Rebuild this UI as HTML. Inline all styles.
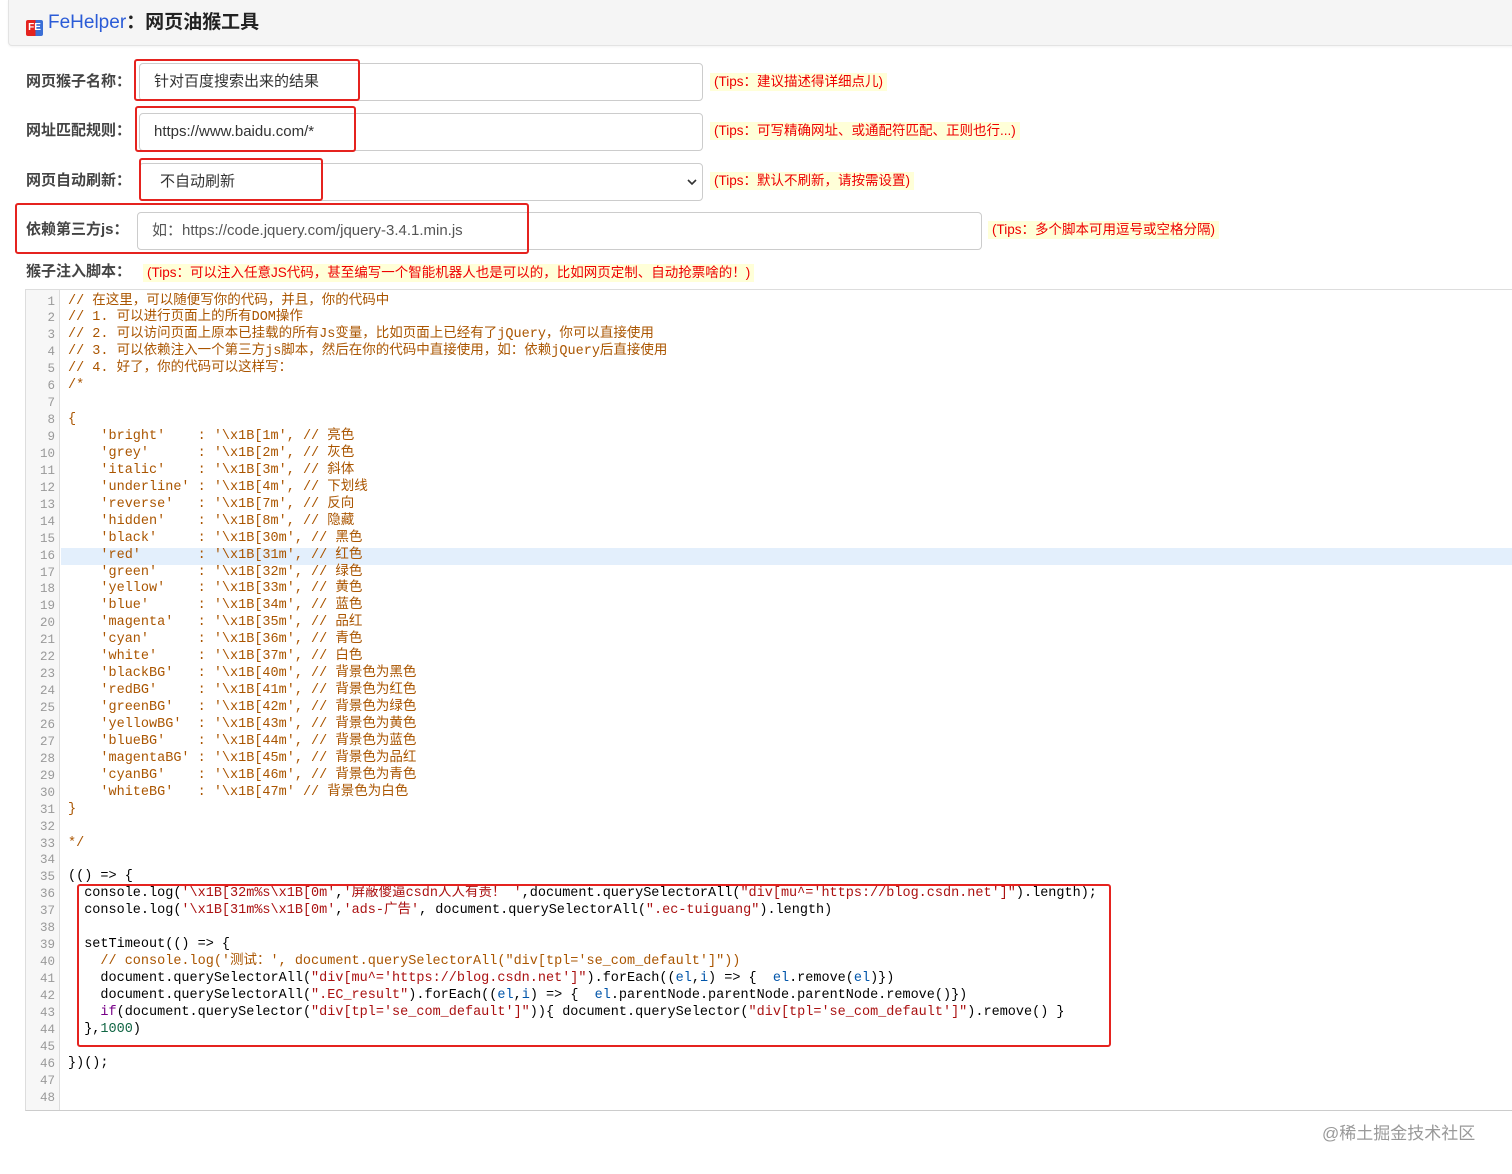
<!DOCTYPE html>
<html><head><meta charset="utf-8"><style>
*{margin:0;padding:0;box-sizing:border-box}
body{width:1512px;height:1174px;background:#fff;position:relative;overflow:hidden;font-family:"Liberation Sans","Noto Sans CJK SC",sans-serif;color:#333}
.a{position:absolute}
.hdr{left:8px;top:0;width:1510px;height:46px;background:#f5f5f5;border:1px solid #e3e3e3;border-top:none;border-radius:0 0 4px 4px;box-shadow:0 1px 2px rgba(0,0,0,.05)}
.title{left:26px;top:12px;font-size:18px;font-weight:bold;color:#222;line-height:22px}
.lbl{left:26px;font-size:15px;font-weight:bold;color:#444;line-height:20px}
.inp{border:1px solid #ccc;border-radius:4px;background:#fff;font-size:15px;color:#333;line-height:36px;padding-left:14px}
.tip{font-size:13.5px;color:#e00;background:#ffffd8;line-height:18px;padding:0 4px}
.rb{border:2px solid #e5231f;border-radius:3px}
.ed{left:25px;top:289px;width:1500px;height:822px;border-top:1px solid #ddd;border-bottom:1px solid #ccc;border-left:1px solid #ddd}
.gut{left:26px;top:290px;width:34px;height:820px;background:#f7f7f7;border-right:1px solid #ddd}
.ln{left:26px;width:29px;text-align:right;font-family:"Liberation Mono",monospace;font-size:12.5px;color:#999;line-height:16.94px}
.code{left:68px;top:293.5px;font-family:"Liberation Mono","Noto Sans CJK SC",monospace;font-size:13.5px;line-height:16.94px;white-space:pre;color:#000}
.c{color:#a50}.s{color:#a11}.v{color:#05a}.n{color:#164}.k{color:#708}
</style></head><body>
<div class="a hdr"></div>
<div class="a title" style="font-size:19px"><span style="display:inline-block;width:17px;height:16px;color:#fff;font-size:10px;line-height:16px;text-align:center;vertical-align:-2px;border-radius:2px;margin-right:5px;background:linear-gradient(90deg,#e4231f 55%,#3b6fd6 55%)">FE</span><span style="color:#2a5bd7;font-weight:normal">FeHelper</span>：网页油猴工具</div>

<div class="a lbl" style="top:72px">网页猴子名称：</div>
<div class="a inp" style="left:139px;top:63px;width:564px;height:38px">针对百度搜索出来的结果</div>
<div class="a tip" style="left:710px;top:73px">(Tips：建议描述得详细点儿)</div>
<div class="a rb" style="left:134px;top:59px;width:226px;height:42px"></div>

<div class="a lbl" style="top:121px">网址匹配规则：</div>
<div class="a inp" style="left:139px;top:113px;width:564px;height:38px">https://www.baidu.com/*</div>
<div class="a tip" style="left:710px;top:122px">(Tips：可写精确网址、或通配符匹配、正则也行...)</div>
<div class="a rb" style="left:135px;top:106px;width:221px;height:46px"></div>

<div class="a lbl" style="top:171px">网页自动刷新：</div>
<div class="a inp" style="left:139px;top:163px;width:564px;height:38px;padding-left:20px">不自动刷新<svg style="position:absolute;right:4px;top:13px" width="12" height="10" viewBox="0 0 12 10"><path d="M2 3l4 4 4-4" stroke="#333" stroke-width="1.6" fill="none"/></svg></div>
<div class="a tip" style="left:710px;top:172px">(Tips：默认不刷新，请按需设置)</div>
<div class="a rb" style="left:139px;top:158px;width:184px;height:43px"></div>

<div class="a lbl" style="top:220px">依赖第三方js：</div>
<div class="a inp" style="left:137px;top:212px;width:845px;height:38px;color:#555">如：https://code.jquery.com/jquery-3.4.1.min.js</div>
<div class="a tip" style="left:988px;top:221px">(Tips：多个脚本可用逗号或空格分隔)</div>
<div class="a rb" style="left:15px;top:203px;width:514px;height:51px"></div>

<div class="a lbl" style="top:262px">猴子注入脚本：</div>
<div class="a tip" style="left:143px;top:264px">(Tips：可以注入任意JS代码，甚至编写一个智能机器人也是可以的，比如网页定制、自动抢票啥的！)</div>

<div class="a ed"></div>
<div class="a gut"></div>
<div class="a" style="left:61px;top:548px;width:1451px;height:17px;background:#e3effc"></div>
<div class="a ln" style="top:293.5px">1<br>2<br>3<br>4<br>5<br>6<br>7<br>8<br>9<br>10<br>11<br>12<br>13<br>14<br>15<br>16<br>17<br>18<br>19<br>20<br>21<br>22<br>23<br>24<br>25<br>26<br>27<br>28<br>29<br>30<br>31<br>32<br>33<br>34<br>35<br>36<br>37<br>38<br>39<br>40<br>41<br>42<br>43<br>44<br>45<br>46<br>47<br>48</div>
<div class="a code"><span class="c">// 在这里，可以随便写你的代码，并且，你的代码中
// 1. 可以进行页面上的所有DOM操作
// 2. 可以访问页面上原本已挂载的所有Js变量，比如页面上已经有了jQuery，你可以直接使用
// 3. 可以依赖注入一个第三方js脚本，然后在你的代码中直接使用，如：依赖jQuery后直接使用
// 4. 好了，你的代码可以这样写：
/*

{
    'bright'    : '\x1B[1m', // 亮色
    'grey'      : '\x1B[2m', // 灰色
    'italic'    : '\x1B[3m', // 斜体
    'underline' : '\x1B[4m', // 下划线
    'reverse'   : '\x1B[7m', // 反向
    'hidden'    : '\x1B[8m', // 隐藏
    'black'     : '\x1B[30m', // 黑色
    'red'       : '\x1B[31m', // 红色
    'green'     : '\x1B[32m', // 绿色
    'yellow'    : '\x1B[33m', // 黄色
    'blue'      : '\x1B[34m', // 蓝色
    'magenta'   : '\x1B[35m', // 品红
    'cyan'      : '\x1B[36m', // 青色
    'white'     : '\x1B[37m', // 白色
    'blackBG'   : '\x1B[40m', // 背景色为黑色
    'redBG'     : '\x1B[41m', // 背景色为红色
    'greenBG'   : '\x1B[42m', // 背景色为绿色
    'yellowBG'  : '\x1B[43m', // 背景色为黄色
    'blueBG'    : '\x1B[44m', // 背景色为蓝色
    'magentaBG' : '\x1B[45m', // 背景色为品红
    'cyanBG'    : '\x1B[46m', // 背景色为青色
    'whiteBG'   : '\x1B[47m' // 背景色为白色
}

*/</span>

(() =&gt; {
  console.log(<span class="s">'\x1B[32m%s\x1B[0m'</span>,<span class="s">'屏蔽傻逼csdn人人有责！ '</span>,document.querySelectorAll(<span class="s">"div[mu^='https://blog.csdn.net']"</span>).length);
  console.log(<span class="s">'\x1B[31m%s\x1B[0m'</span>,<span class="s">'ads-广告'</span>, document.querySelectorAll(<span class="s">".ec-tuiguang"</span>).length)

  setTimeout(() =&gt; {
    <span class="c">// console.log('测试：', document.querySelectorAll("div[tpl='se_com_default']"))</span>
    document.querySelectorAll(<span class="s">"div[mu^='https://blog.csdn.net']"</span>).forEach((<span class="v">el</span>,<span class="v">i</span>) =&gt; {  <span class="v">el</span>.remove(<span class="v">el</span>)})
    document.querySelectorAll(<span class="s">".EC_result"</span>).forEach((<span class="v">el</span>,<span class="v">i</span>) =&gt; {  <span class="v">el</span>.parentNode.parentNode.parentNode.remove()})
    <span class="k">if</span>(document.querySelector(<span class="s">"div[tpl='se_com_default']"</span>)){ document.querySelector(<span class="s">"div[tpl='se_com_default']"</span>).remove() }
  },<span class="n">1000</span>)

})();

</div>
<div class="a rb" style="left:77px;top:884px;width:1034px;height:163px"></div>
<div class="a" style="left:1322px;top:1123px;font-size:17px;color:#999;line-height:22px">@稀土掘金技术社区</div>
</body></html>
